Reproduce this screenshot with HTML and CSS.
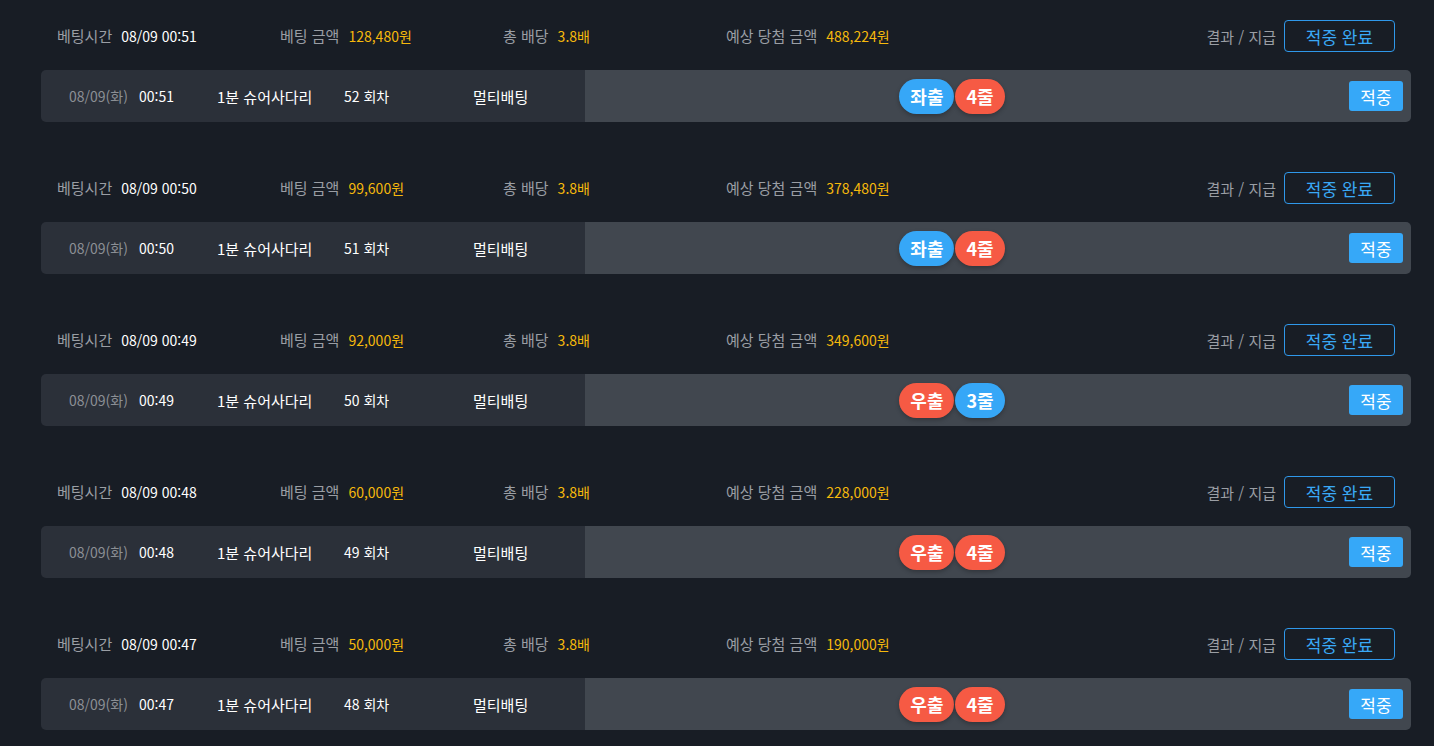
FILE: index.html
```html
<!DOCTYPE html>
<html lang="ko">
<head>
    <meta charset="UTF-8">
    <title>베팅내역</title>
    <link rel="stylesheet" href="styles.css">
</head>
<body>
    <div class="bet-list">

        <div class="bet">
            <div class="bet-head">
                <div class="col"><span class="label">베팅시간</span><span class="val">08/09 00:51</span></div>
                <div class="col"><span class="label">베팅 금액</span><span class="val gold">128,480원</span></div>
                <div class="col"><span class="label">총 배당</span><span class="val gold">3.8배</span></div>
                <div class="col"><span class="label">예상 당첨 금액</span><span class="val gold">488,224원</span></div>
                <div class="result"><span class="label">결과 / 지급</span><button class="btn-done">적중 완료</button></div>
            </div>
            <div class="bet-row">
                <div class="info">
                    <span class="date">08/09(화)</span>
                    <span class="time">00:51</span>
                    <span class="game">1분 슈어사다리</span>
                    <span class="round">52 회차</span>
                    <span class="type">멀티배팅</span>
                </div>
                <div class="pick">
                    <div class="badges"><span class="badge blue">좌출</span><span class="badge red">4줄</span></div>
                    <div class="state"><button class="btn-hit">적중</button></div>
                </div>
            </div>
        </div>

        <div class="bet">
            <div class="bet-head">
                <div class="col"><span class="label">베팅시간</span><span class="val">08/09 00:50</span></div>
                <div class="col"><span class="label">베팅 금액</span><span class="val gold">99,600원</span></div>
                <div class="col"><span class="label">총 배당</span><span class="val gold">3.8배</span></div>
                <div class="col"><span class="label">예상 당첨 금액</span><span class="val gold">378,480원</span></div>
                <div class="result"><span class="label">결과 / 지급</span><button class="btn-done">적중 완료</button></div>
            </div>
            <div class="bet-row">
                <div class="info">
                    <span class="date">08/09(화)</span>
                    <span class="time">00:50</span>
                    <span class="game">1분 슈어사다리</span>
                    <span class="round">51 회차</span>
                    <span class="type">멀티배팅</span>
                </div>
                <div class="pick">
                    <div class="badges"><span class="badge blue">좌출</span><span class="badge red">4줄</span></div>
                    <div class="state"><button class="btn-hit">적중</button></div>
                </div>
            </div>
        </div>

        <div class="bet">
            <div class="bet-head">
                <div class="col"><span class="label">베팅시간</span><span class="val">08/09 00:49</span></div>
                <div class="col"><span class="label">베팅 금액</span><span class="val gold">92,000원</span></div>
                <div class="col"><span class="label">총 배당</span><span class="val gold">3.8배</span></div>
                <div class="col"><span class="label">예상 당첨 금액</span><span class="val gold">349,600원</span></div>
                <div class="result"><span class="label">결과 / 지급</span><button class="btn-done">적중 완료</button></div>
            </div>
            <div class="bet-row">
                <div class="info">
                    <span class="date">08/09(화)</span>
                    <span class="time">00:49</span>
                    <span class="game">1분 슈어사다리</span>
                    <span class="round">50 회차</span>
                    <span class="type">멀티배팅</span>
                </div>
                <div class="pick">
                    <div class="badges"><span class="badge red">우출</span><span class="badge blue">3줄</span></div>
                    <div class="state"><button class="btn-hit">적중</button></div>
                </div>
            </div>
        </div>

        <div class="bet">
            <div class="bet-head">
                <div class="col"><span class="label">베팅시간</span><span class="val">08/09 00:48</span></div>
                <div class="col"><span class="label">베팅 금액</span><span class="val gold">60,000원</span></div>
                <div class="col"><span class="label">총 배당</span><span class="val gold">3.8배</span></div>
                <div class="col"><span class="label">예상 당첨 금액</span><span class="val gold">228,000원</span></div>
                <div class="result"><span class="label">결과 / 지급</span><button class="btn-done">적중 완료</button></div>
            </div>
            <div class="bet-row">
                <div class="info">
                    <span class="date">08/09(화)</span>
                    <span class="time">00:48</span>
                    <span class="game">1분 슈어사다리</span>
                    <span class="round">49 회차</span>
                    <span class="type">멀티배팅</span>
                </div>
                <div class="pick">
                    <div class="badges"><span class="badge red">우출</span><span class="badge red">4줄</span></div>
                    <div class="state"><button class="btn-hit">적중</button></div>
                </div>
            </div>
        </div>

        <div class="bet">
            <div class="bet-head">
                <div class="col"><span class="label">베팅시간</span><span class="val">08/09 00:47</span></div>
                <div class="col"><span class="label">베팅 금액</span><span class="val gold">50,000원</span></div>
                <div class="col"><span class="label">총 배당</span><span class="val gold">3.8배</span></div>
                <div class="col"><span class="label">예상 당첨 금액</span><span class="val gold">190,000원</span></div>
                <div class="result"><span class="label">결과 / 지급</span><button class="btn-done">적중 완료</button></div>
            </div>
            <div class="bet-row">
                <div class="info">
                    <span class="date">08/09(화)</span>
                    <span class="time">00:47</span>
                    <span class="game">1분 슈어사다리</span>
                    <span class="round">48 회차</span>
                    <span class="type">멀티배팅</span>
                </div>
                <div class="pick">
                    <div class="badges"><span class="badge red">우출</span><span class="badge red">4줄</span></div>
                    <div class="state"><button class="btn-hit">적중</button></div>
                </div>
            </div>
        </div>

    </div>
</body>
</html>
```

FILE: styles.css
```css
/* bet history list */
body {
    margin: 0;
    background-color: #181d25;
    font-family: "Noto Sans CJK KR", "Noto Sans", sans-serif;
    font-size: 14px;
    color: #fff;
}

.bet-list {
    padding: 20px 23px 0 41px;
}

.bet {
    margin-bottom: 50px;
}

/* header line */
.bet-head {
    display: flex;
    align-items: center;
    height: 32px;
    padding: 0 16px;
    margin-bottom: 18px;
}

.col {
    width: 223px;
    display: flex;
    align-items: center;
    line-height: 30px;
}

.label {
    color: #9a9ea4;
    font-size: 15px;
    margin-right: 9px;
}

.val {
    color: #fff;
}

.gold {
    color: #f6b90c;
}

.result {
    margin-left: auto;
    display: flex;
    align-items: center;
}

.result .label {
    margin-right: 8px;
}

.btn-done {
    width: 111px;
    height: 32px;
    background: transparent;
    border: 1px solid #2f98ea;
    border-radius: 4px;
    color: #3aa9f6;
    font-family: inherit;
    font-size: 17px;
    padding: 0;
}

/* detail row */
.bet-row {
    display: flex;
    height: 52px;
    border-radius: 5px;
    overflow: hidden;
}

.info {
    width: 544px;
    background: #2b3039;
    display: flex;
    align-items: center;
    padding-left: 28px;
    box-sizing: border-box;
}

.date  { width: 70px; color: #8b8f95; }
.time  { width: 78px; }
.game  { width: 127px; font-size: 15px; }
.round { width: 129px; }
.type  { font-size: 15px; }

.pick {
    flex: 1;
    background: #41474f;
    display: flex;
    align-items: center;
}

.badges {
    flex: 1;
    display: flex;
    justify-content: center;
    gap: 1px;
}

.badge {
    height: 35px;
    line-height: 35px;
    padding: 0 11px;
    border-radius: 18px;
    font-size: 18px;
    font-weight: bold;
    box-shadow: 0 2px 4px rgba(0, 0, 0, 0.25);
}

.blue { background: #36a7f7; }
.red  { background: #f65a44; }

.state {
    width: 92px;
    display: flex;
    justify-content: flex-end;
    padding-right: 8px;
    box-sizing: border-box;
}

.btn-hit {
    width: 54px;
    height: 30px;
    background: #36a8f8;
    border: none;
    border-radius: 3px;
    color: #fff;
    font-family: inherit;
    font-size: 17px;
    padding: 0;
}
```
